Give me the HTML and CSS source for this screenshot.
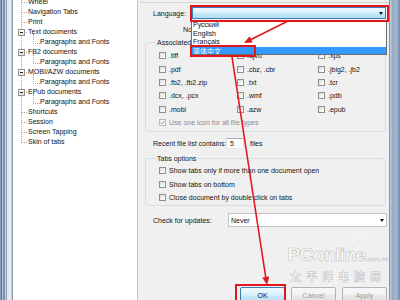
FILE: index.html
```html
<!DOCTYPE html>
<html>
<head>
<meta charset="utf-8">
<link rel="stylesheet" href="styles.css">
</head>
<body>
<div class="window">
  <div class="frame-l"></div>
  <div class="tree">
    <ul class="nodes">
      <li class="top">Wheel</li>
      <li class="top">Navigation Tabs</li>
      <li class="top">Print</li>
      <li class="top"><i class="box"></i>Text documents</li>
      <li class="child">Paragraphs and Fonts</li>
      <li class="top"><i class="box"></i>FB2 documents</li>
      <li class="child">Paragraphs and Fonts</li>
      <li class="top"><i class="box"></i>MOBI/AZW documents</li>
      <li class="child">Paragraphs and Fonts</li>
      <li class="top"><i class="box"></i>EPub documents</li>
      <li class="child">Paragraphs and Fonts</li>
      <li class="top">Shortcuts</li>
      <li class="top">Session</li>
      <li class="top">Screen Tapping</li>
      <li class="top">Skin of tabs</li>
    </ul>
  </div>
  <div class="main">
    <div class="content">
      <div class="row lang">
        <span class="lbl lang-lbl">Language:</span>
        <div class="combo hot"><i class="arrow"></i></div>
      </div>
      <div class="note">Note: restart required</div>
      <div class="group assoc">
        <div class="gtitle">Associated file types</div>
        <div class="ftypes">
          <div class="cbrow"><i class="cb"></i>.tiff</div>
          <div class="cbrow"><i class="cb"></i>.djvu</div>
          <div class="cbrow"><i class="cb"></i>.xps</div>
          <div class="cbrow"><i class="cb"></i>.pdf</div>
          <div class="cbrow"><i class="cb"></i>.cbz, .cbr</div>
          <div class="cbrow"><i class="cb"></i>.jbig2, .jb2</div>
          <div class="cbrow"><i class="cb"></i>.fb2, .fb2.zip</div>
          <div class="cbrow"><i class="cb"></i>.txt</div>
          <div class="cbrow"><i class="cb"></i>.tcr</div>
          <div class="cbrow"><i class="cb"></i>.dcx, .pcx</div>
          <div class="cbrow"><i class="cb"></i>.wmf</div>
          <div class="cbrow"><i class="cb"></i>.pdb</div>
          <div class="cbrow"><i class="cb"></i>.mobi</div>
          <div class="cbrow"><i class="cb"></i>.azw</div>
          <div class="cbrow"><i class="cb"></i>.epub</div>
        </div>
        <div class="cbrow use dis"><i class="cb"><svg width="5" height="5" viewBox="0 0 5 5"><polyline points="0.5,2.5 2,4 4.5,0.8" fill="none" stroke="#a6a6a6" stroke-width="1"/></svg></i>Use one icon for all file types</div>
      </div>
      <div class="row recent">
        <span class="lbl recent-lbl">Recent file list contains:</span>
        <span class="input">5</span>
        <span class="files">files</span>
      </div>
      <div class="group tabs">
        <div class="gtitle">Tabs options</div>
        <div class="opts">
          <div class="cbrow"><i class="cb"></i>Show tabs only if more than one document open</div>
          <div class="cbrow"><i class="cb"></i>Show tabs on bottom</div>
          <div class="cbrow"><i class="cb"></i>Close document by double click on tabs</div>
        </div>
      </div>
      <div class="row updates">
        <span class="lbl upd-lbl">Check for updates:</span>
        <div class="combo plain"><span class="val">Never</span><i class="arrow"></i></div>
      </div>
      <div class="buttons">
        <div class="btn default">OK</div>
        <div class="btn faded">Cancel</div>
        <div class="btn faded">Apply</div>
      </div>
    </div>
  </div>
  <div class="frame-r"></div>
</div>

<div class="dropdown">
  <div class="item">Русский</div>
  <div class="item">English</div>
  <div class="item">Français</div>
  <div class="item sel">简体中文</div>
</div>

<div class="wm">
  <svg class="wm-arc" width="24" height="12" viewBox="0 0 24 12"><path d="M3 11 A10 10 0 0 1 21 7" fill="none" stroke="#fff" stroke-width="2.2"/><path d="M3 11 A10 10 0 0 1 21 7" fill="none" stroke="#c4c4c4" stroke-width="0.5"/><path d="M7 11 A6 6 0 0 1 17 8" fill="none" stroke="#fff" stroke-width="2"/><path d="M7 11 A6 6 0 0 1 17 8" fill="none" stroke="#c4c4c4" stroke-width="0.5"/></svg>
  <div class="brand">PConline<span class="dom">.com.cn</span></div>
  <div class="cn">太平洋电脑网</div>
</div>

<div class="mark m1"></div>
<div class="mark m2"></div>
<div class="mark m3"></div>

<svg class="arrows" width="400" height="300" viewBox="0 0 400 300">
  <line x1="288" y1="21" x2="250" y2="40" stroke="#e3161e" stroke-width="1.6"/>
  <polygon points="244,43 252.7,42.5 249.6,36.3" fill="#e3161e"/>
  <line x1="232" y1="57" x2="266" y2="279" stroke="#e3161e" stroke-width="1.6"/>
  <polygon points="267,285 269.3,276.6 262.3,277.6" fill="#e3161e"/>
</svg>
</body>
</html>
```

FILE: styles.css
```css
* { box-sizing: border-box; }
html, body { margin: 0; padding: 0; }
body {
  width: 400px;
  height: 300px;
  overflow: hidden;
  position: relative;
  background: #f0f0f0;
  color: #151515;
  font-family: "Liberation Sans", Arial, sans-serif;
  font-size: 7px;
}

.window { display: flex; height: 300px; }

.frame-l {
  flex: 0 0 12px;
  background: linear-gradient(to right,
    #8a9db5 0 1px, #5a7495 1px 2px, #b8c7d9 2px 3px, #7890ad 3px 5px,
    #c9d5e2 5px 6px, #8ea2ba 6px 7px, #e4e9ef 7px 11px, #c7ced6 11px 12px);
}

.frame-r {
  flex: 0 0 11px;
  border-left: 1px solid #8795a6;
  background: linear-gradient(to right, #c4d1df, #8fa5c0 30%, #a9bbd0 60%, #6f89aa);
}

/* tree */
.tree {
  flex: 0 0 126px;
  background: #fff;
  border-left: 1px solid #8e99a6;
  border-right: 1px solid #c4c4c4;
  overflow: hidden;
}
.nodes {
  list-style: none;
  margin: -3px 0 0 0;
  padding: 0;
  position: relative;
  white-space: nowrap;
  color: #111;
}
.nodes::before {
  content: "";
  position: absolute;
  left: 8px;
  top: 0;
  height: 146px;
  border-left: 1px dotted #a8a8a8;
}
.nodes li {
  position: relative;
  height: 10px;
  line-height: 10px;
}
.nodes .top { padding-left: 15px; }
.nodes .top::before {
  content: "";
  position: absolute;
  left: 8px;
  top: 5px;
  width: 6px;
  border-top: 1px dotted #a8a8a8;
}
.nodes .child { padding-left: 27px; }
.nodes .child::before {
  content: "";
  position: absolute;
  left: 20px;
  top: -3px;
  width: 6px;
  height: 9px;
  border-left: 1px dotted #a8a8a8;
  border-bottom: 1px dotted #a8a8a8;
}
.box {
  position: absolute;
  left: 5px;
  top: 1.5px;
  width: 7px;
  height: 7px;
  border: 1px solid #929292;
  background: linear-gradient(#ffffff, #e3e3e3);
  z-index: 1;
}
.box::after {
  content: "";
  position: absolute;
  left: 1px;
  top: 2px;
  width: 3px;
  height: 1px;
  background: #222;
}

/* main settings page */
.main { flex: 1; padding-top: 2px; }
.content {
  margin-left: 2px;
  border-top: 1px solid #d6d6d6;
  padding: 0 2px 0 5px;
}
.row { display: flex; align-items: center; white-space: nowrap; }
.lbl { display: block; margin-left: 8px; flex: none; }

.lang { height: 16px; margin-top: 2px; }
.lang-lbl { width: 39px; }

.combo {
  height: 12px;
  border: 1px solid #acacac;
  display: flex;
  align-items: center;
}
.combo.hot {
  width: 194px;
  border-color: #3c7fb1;
  background: linear-gradient(#eef8fe, #dcf1fc 45%, #c6e7f8 55%, #b3def6);
}
.combo.plain {
  flex: 1;
  height: 14px;
  background: #fff;
  border-color: #c3c3c3;
}
.combo .val { padding-left: 2px; }
.arrow {
  margin-left: auto;
  margin-right: 2px;
  width: 0;
  height: 0;
  border-left: 2.5px solid transparent;
  border-right: 2.5px solid transparent;
  border-top: 3px solid #111;
}

.note {
  margin: 4px 0 0 38px;
  height: 9px;
  line-height: 9px;
  white-space: nowrap;
}

.group {
  border: 1px solid #d5dfe5;
  border-radius: 3px;
  margin-right: 1px;
}
.gtitle {
  width: max-content;
  height: 9px;
  line-height: 9px;
  margin: -5px 0 0 10px;
  padding: 0 1px;
  background: #f0f0f0;
  white-space: nowrap;
}

.assoc { margin-top: 8px; padding-bottom: 1.6px; }
.ftypes {
  display: grid;
  grid-template-columns: 78px 81px 1fr;
  grid-auto-rows: 13.4px;
  margin-top: 2px;
  padding-left: 13px;
}
.cbrow { display: flex; align-items: center; white-space: nowrap; }
.cb {
  flex: none;
  width: 7px;
  height: 7px;
  margin-right: 3px;
  border: 1px solid #8f8f8f;
  background: linear-gradient(135deg, #d8d8d8, #f7f7f7 70%, #ffffff);
  display: flex;
  align-items: center;
  justify-content: center;
}
.cb svg { display: block; }
.use { height: 13.4px; padding-left: 13px; }
.dis { color: #8c8c8c; }
.dis .cb { border-color: #bdbdbd; background: #f4f4f4; }

.recent { margin-top: 6px; height: 12px; }
.recent-lbl { width: 73px; }
.input {
  width: 18px;
  height: 11px;
  line-height: 9px;
  padding-left: 3px;
  background: #fff;
  border: 1px solid;
  border-color: #abadb3 #dbdfe6 #e3e9ef #e2e3ea;
}
.files { margin-left: 6px; }

.tabs { margin-top: 8px; padding-bottom: 1px; }
.opts {
  display: grid;
  grid-auto-rows: 13.4px;
  margin-top: 1px;
  padding-left: 13px;
}

.updates { margin-top: 7px; height: 14px; }
.upd-lbl { width: 75px; }

.buttons {
  display: flex;
  justify-content: flex-end;
  gap: 6px;
  margin-top: 60px;
}
.btn {
  width: 45px;
  height: 17px;
  line-height: 15px;
  text-align: center;
  border: 1px solid #8a8a8a;
  border-radius: 2px;
  background: linear-gradient(#f4f4f4, #ececec 50%, #dedede 50%, #d2d2d2);
  color: #444;
}
.btn.faded {
  border-color: #b4b4b4;
  color: #a0a0a0;
  background: linear-gradient(#f8f8f8, #f1f1f1 50%, #e8e8e8 50%, #e0e0e0);
}
.btn.default {
  border-color: #3c7fb1;
  color: #111;
  background: linear-gradient(#eef8fe, #dcf1fc 45%, #c6e7f8 55%, #b3def6);
}

/* overlays */
.dropdown {
  position: absolute;
  left: 191px;
  top: 20px;
  width: 196px;
  height: 35px;
  overflow: hidden;
  background: #fff;
  border: 1px solid #6e6e6e;
}
.item {
  height: 8.6px;
  line-height: 8.6px;
  padding-left: 1px;
  white-space: nowrap;
  color: #111;
}
.item.sel {
  background: #3399ff;
  color: #fff;
  font-family: "Noto Sans CJK SC", sans-serif;
}

.mark {
  position: absolute;
  border: 2px solid #e3161e;
}
.m1 { left: 190px; top: 5px; width: 199px; height: 17px; }
.m2 { left: 190px; top: 45px; width: 66px; height: 12px; }
.m3 { left: 235px; top: 284px; width: 51px; height: 20px; }

.arrows { position: absolute; left: 0; top: 0; pointer-events: none; }

.wm {
  position: absolute;
  left: 286px;
  top: 234px;
  width: 104px;
  display: flex;
  flex-direction: column;
  align-items: center;
  color: #fff;
  opacity: 0.9;
}
.wm-arc { margin-left: 40px; height: 12px; display: block; }
.brand {
  margin-top: -1px;
  font: bold 19px/19px "Liberation Sans", Arial, sans-serif;
  letter-spacing: -0.5px;
  -webkit-text-stroke: 0.6px #b9b9b9;
  white-space: nowrap;
}
.brand .dom {
  font-size: 6px;
  letter-spacing: 0;
  -webkit-text-stroke: 0.3px #b9b9b9;
}
.cn {
  margin-top: 1px;
  font: bold 11px/12px "Noto Sans CJK SC", sans-serif;
  letter-spacing: 5px;
  -webkit-text-stroke: 0.5px #b9b9b9;
  white-space: nowrap;
}
```
